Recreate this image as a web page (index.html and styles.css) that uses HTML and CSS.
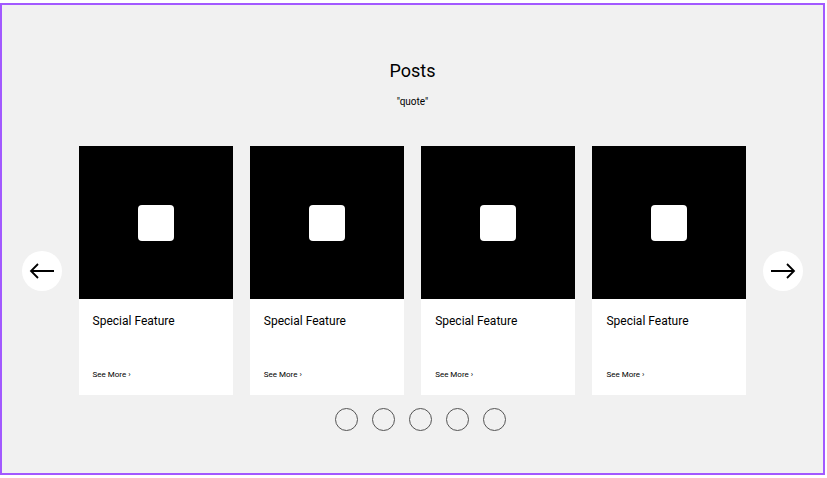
FILE: index.html
```html
<!DOCTYPE html>
<html>
<head>
<meta charset="utf-8">
<link rel="stylesheet" href="styles.css">
</head>
<body>
<div class="frame">
  <h1 class="title">Posts</h1>
  <p class="quote">"quote"</p>
  <div class="carousel">
    <button class="nav">
      <svg width="26" height="16" viewBox="0 0 26 16"><path d="M25 8H2M9 1L2 8l7 7" fill="none" stroke="#000" stroke-width="1.8"/></svg>
    </button>
    <div class="cards">
      <div class="card"><div class="thumb"><div class="sq"></div></div><div class="body"><div class="name">Special Feature</div><div class="more">See More ›</div></div></div>
      <div class="card"><div class="thumb"><div class="sq"></div></div><div class="body"><div class="name">Special Feature</div><div class="more">See More ›</div></div></div>
      <div class="card"><div class="thumb"><div class="sq"></div></div><div class="body"><div class="name">Special Feature</div><div class="more">See More ›</div></div></div>
      <div class="card"><div class="thumb"><div class="sq"></div></div><div class="body"><div class="name">Special Feature</div><div class="more">See More ›</div></div></div>
    </div>
    <button class="nav">
      <svg width="26" height="16" viewBox="0 0 26 16"><path d="M1 8h23M17 1l7 7-7 7" fill="none" stroke="#000" stroke-width="1.8"/></svg>
    </button>
  </div>
  <div class="dots">
    <span class="dot"></span><span class="dot"></span><span class="dot"></span><span class="dot"></span><span class="dot"></span>
  </div>
</div>
</body>
</html>
```
FILE: styles.css
```css
html, body { margin: 0; padding: 0; background: #fff; }
body { font-family: Roboto, "Liberation Sans", sans-serif; color: #000; }
.frame {
  box-sizing: border-box;
  margin-top: 3px;
  width: 825px;
  height: 472px;
  border: 2px solid #a259ff;
  background: #f1f1f1;
  display: flex;
  flex-direction: column;
  align-items: center;
}
.title {
  margin: 55px 0 0;
  font-size: 18px;
  font-weight: 400;
  line-height: 22px;
}
.quote {
  margin: 14px 0 0;
  font-size: 10px;
  line-height: 12px;
}
.carousel {
  margin-top: 38px;
  display: flex;
  align-items: center;
  gap: 17px;
}
.nav {
  width: 40px;
  height: 40px;
  border-radius: 50%;
  border: none;
  background: #fff;
  padding: 0;
  display: flex;
  align-items: center;
  justify-content: center;
}
.cards { display: flex; gap: 17.3px; }
.card { width: 154px; background: #fff; }
.thumb {
  height: 153px;
  background: #000;
  display: flex;
  align-items: center;
  justify-content: center;
}
.sq { width: 36px; height: 36px; background: #fff; border-radius: 4px; }
.body {
  height: 96px;
  box-sizing: border-box;
  padding: 15px 14px 0;
  display: flex;
  flex-direction: column;
}
.name { font-size: 12px; line-height: 14px; }
.more { margin-top: 42px; font-size: 8px; line-height: 10px; }
.dots { margin-top: 13px; margin-left: 16px; display: flex; gap: 14px; }
.dot {
  width: 21px;
  height: 21px;
  border: 1px solid #555;
  border-radius: 50%;
}
```
